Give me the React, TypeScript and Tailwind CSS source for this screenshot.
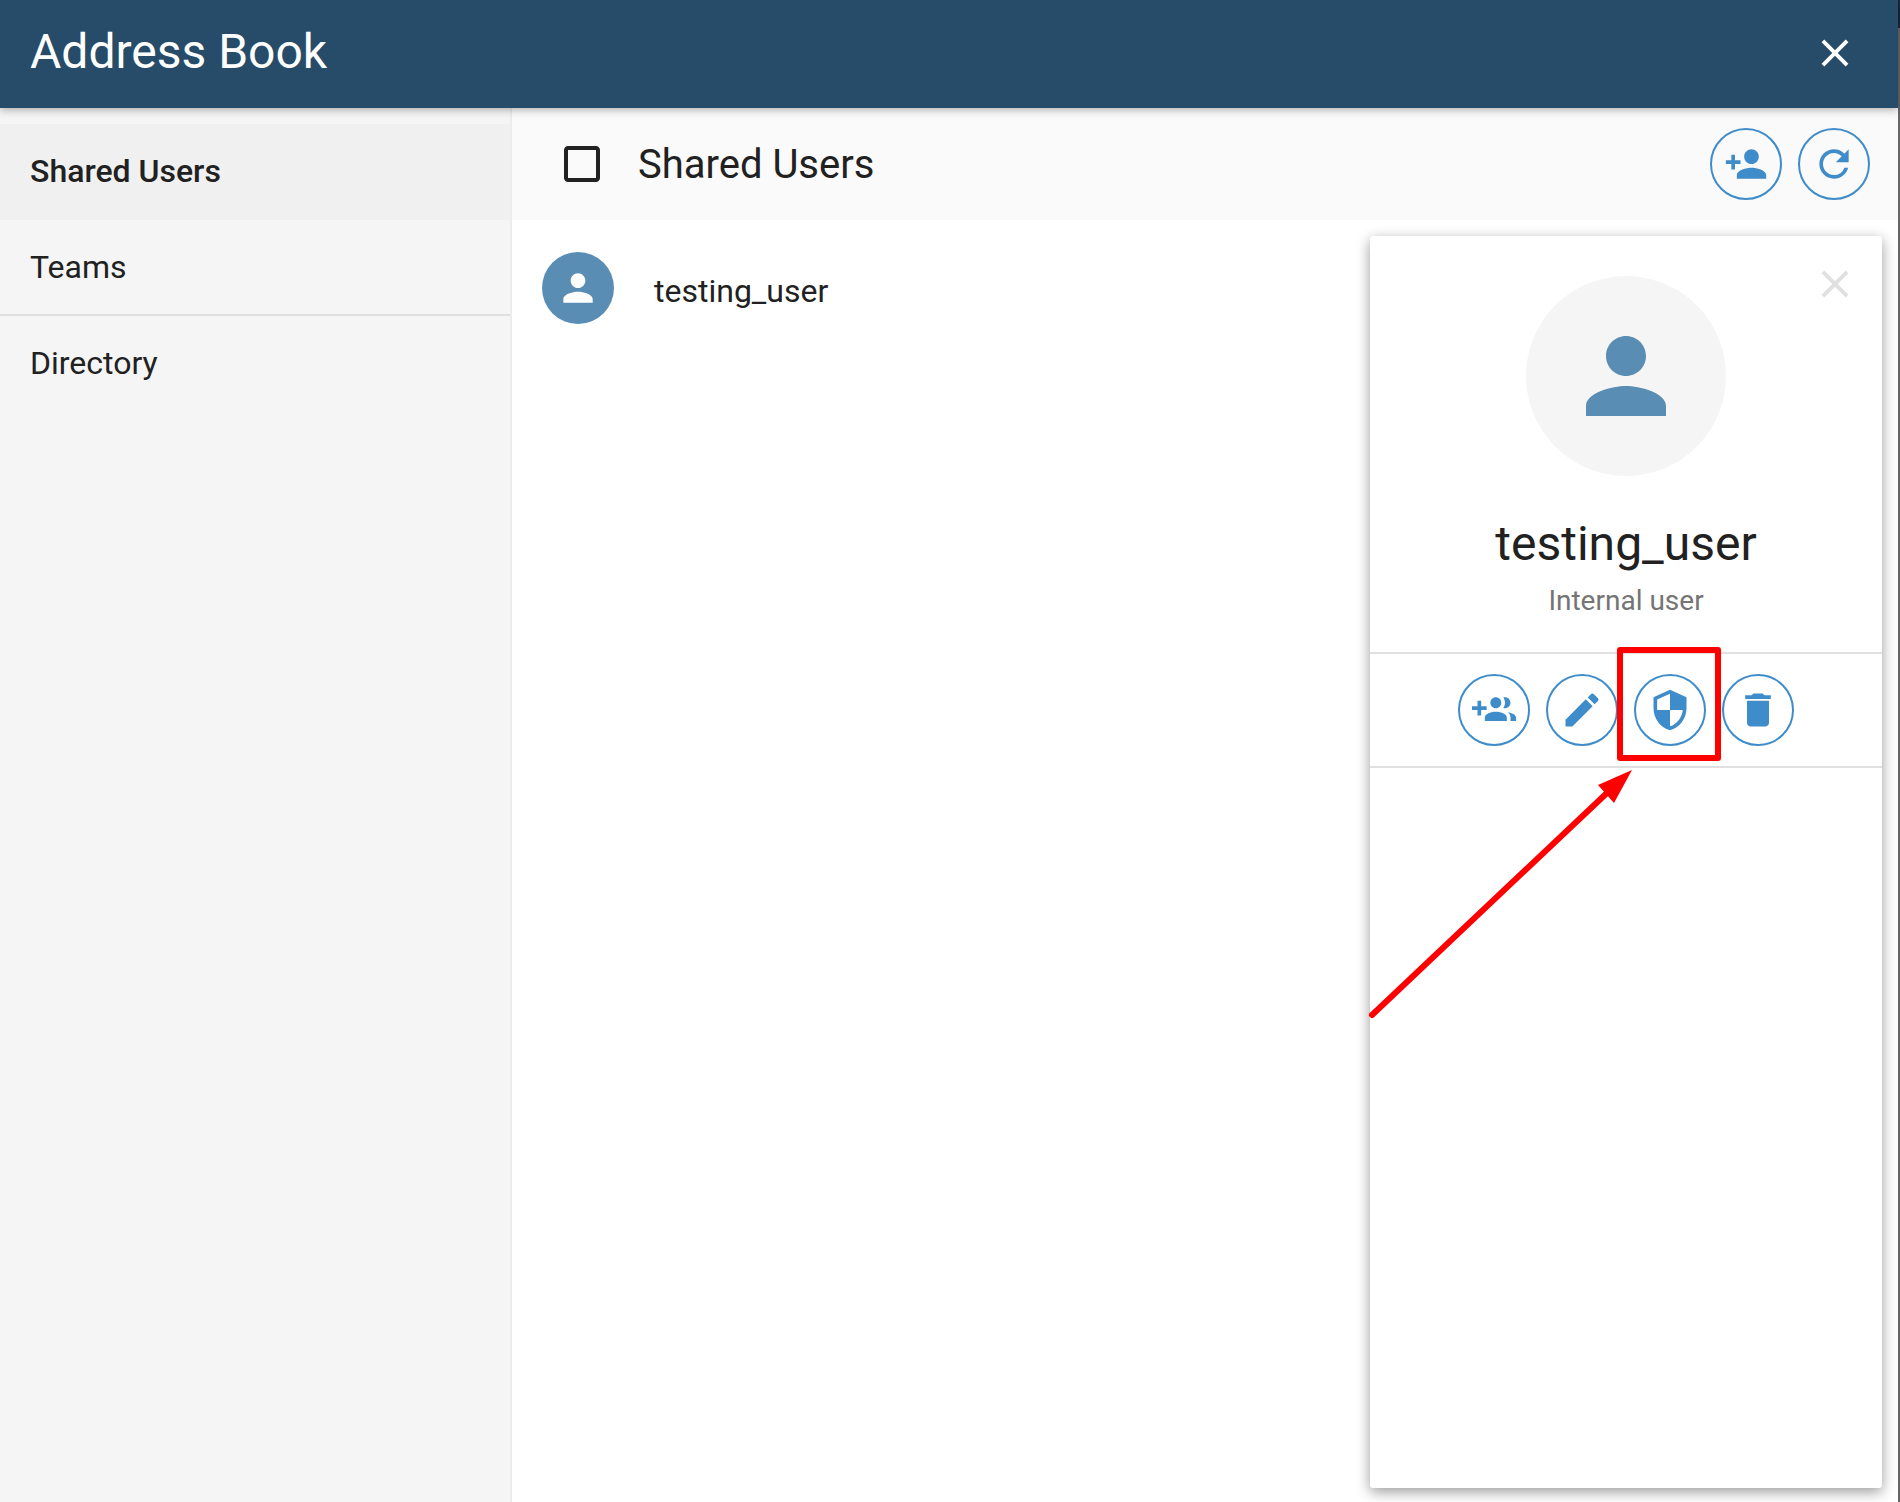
import React from 'react';
import {
  MdCheckBoxOutlineBlank,
  MdClose,
  MdDelete,
  MdEdit,
  MdPerson,
  MdPersonAdd,
  MdRefresh,
} from 'react-icons/md';

const GroupAddIcon = ({ size = 44 }: { size?: number }) => (
  <svg width={size} height={size} viewBox="0 0 24 24" fill="currentColor">
    <path d="M8 10H5V7H3v3H0v2h3v3h2v-3h3v-2zm10 1c1.66 0 2.99-1.34 2.99-3S19.66 5 18 5c-.32 0-.63.05-.91.14.57.81.9 1.79.9 2.86s-.34 2.04-.9 2.86c.28.09.59.14.91.14zm-5 0c1.66 0 2.99-1.34 2.99-3S14.66 5 13 5c-1.66 0-3 1.34-3 3s1.34 3 3 3zm6.62 2.16c.83.73 1.38 1.66 1.38 2.84v2h3v-2c0-1.54-2.37-2.49-4.38-2.84zM13 13c-2 0-6 1-6 3v2h12v-2c0-2-4-3-6-3z" />
  </svg>
);

const ShieldIcon = ({ size = 44 }: { size?: number }) => (
  <svg width={size} height={size} viewBox="0 0 24 24" fill="currentColor">
    <path d="M12 1L3 5v6c0 5.55 3.84 10.74 9 12 5.16-1.26 9-6.45 9-12V5l-9-4zm0 10.99h7c-.53 4.12-3.28 7.79-7 8.94V12H5V6.3l7-3.11v8.8z" />
  </svg>
);

const CircleButton = ({ icon: Icon }: { icon: React.ComponentType<{ size?: number }> }) => (
  <button className="flex h-[72px] w-[72px] items-center justify-center rounded-full border-2 border-[#3f8cca] text-[#3f8cca]">
    <Icon size={44} />
  </button>
);

const Sidebar = () => (
  <aside className="w-[512px] shrink-0 border-r-2 border-[#ececec] bg-[#f5f5f5] pt-4 text-[32px] text-[#212121]">
    <div className="flex h-[96px] items-center bg-[#f0f0f0] pb-[2px] pl-[30px] font-medium">Shared Users</div>
    <div className="flex h-[96px] items-center border-b-2 border-[#e0e0e0] pl-[30px]">Teams</div>
    <div className="flex h-[96px] items-center pb-[2px] pl-[30px]">Directory</div>
  </aside>
);

const DetailPanel = () => (
  <section className="absolute top-[236px] left-[1370px] flex h-[1252px] w-[512px] flex-col rounded-[3px] bg-white shadow-[0_4px_14px_rgba(0,0,0,0.4)]">
    <button className="absolute top-[25px] right-[24px] text-[#e0e0e0]">
      <MdClose size={46} />
    </button>
    <div className="mt-10 flex h-[200px] w-[200px] items-center justify-center self-center rounded-full bg-[#f5f5f5] text-[#5a8db3]">
      <MdPerson size={120} />
    </div>
    <h2 className="mt-[36px] text-center text-[48px] leading-[64px] font-normal text-[#212121]">testing_user</h2>
    <p className="mt-[5px] text-center text-[28px] leading-[40px] text-[#757575]">Internal user</p>
    <div className="mt-[31px] flex h-[116px] items-center justify-center gap-4 border-y-2 border-[#e0e0e0]">
      <CircleButton icon={GroupAddIcon} />
      <CircleButton icon={MdEdit} />
      <CircleButton icon={ShieldIcon} />
      <CircleButton icon={MdDelete} />
    </div>
  </section>
);

const Annotation = () => (
  <svg className="pointer-events-none absolute top-0 left-0" width="1900" height="1502" fill="none">
    <rect x="1620" y="650" width="98" height="108" stroke="#ff0000" strokeWidth="6" strokeLinejoin="round" />
    <path d="M1372 1015 L1608 792" stroke="#ff0000" strokeWidth="6" strokeLinecap="round" />
    <path d="M1632 770 L1598 785 L1614 803 Z" fill="#ff0000" />
  </svg>
);

export default function App() {
  return (
    <div className="relative flex h-[1502px] w-[1900px] overflow-hidden bg-white font-['Roboto',sans-serif]">
      <div className="w-[1898px] shrink-0">
        <header className="relative z-10 flex h-[108px] items-center justify-between bg-[#274c6a] pr-[40px] pl-[30px] text-white shadow-[0_2px_8px_rgba(0,0,0,0.3)]">
          <h1 className="pb-[4px] text-[48px] font-normal">Address Book</h1>
          <span className="pb-[2px]">
            <MdClose size={46} />
          </span>
        </header>
        <div className="flex h-[1394px]">
          <Sidebar />
          <main className="flex-1">
            <div className="flex h-[112px] items-center justify-between bg-[#fafafa] pr-[28px] pl-[46px]">
              <div className="flex items-center gap-[32px]">
                <span className="text-[#212121]">
                  <MdCheckBoxOutlineBlank size={48} />
                </span>
                <span className="pt-[2px] text-[40px] text-[#212121]">Shared Users</span>
              </div>
              <div className="flex gap-4">
                <CircleButton icon={MdPersonAdd} />
                <CircleButton icon={MdRefresh} />
              </div>
            </div>
            <div className="mt-8 flex items-center gap-10 pl-[30px]">
              <div className="flex h-[72px] w-[72px] items-center justify-center rounded-full bg-[#5a8db3] text-white">
                <MdPerson size={44} />
              </div>
              <span className="pt-[6px] text-[32px] text-[#212121]">testing_user</span>
            </div>
          </main>
        </div>
      </div>
      <div className="flex w-[2px] flex-col bg-[#666666]">
        <div className="h-[28px] bg-[#1c2836]" />
      </div>
      <DetailPanel />
      <Annotation />
    </div>
  );
}
